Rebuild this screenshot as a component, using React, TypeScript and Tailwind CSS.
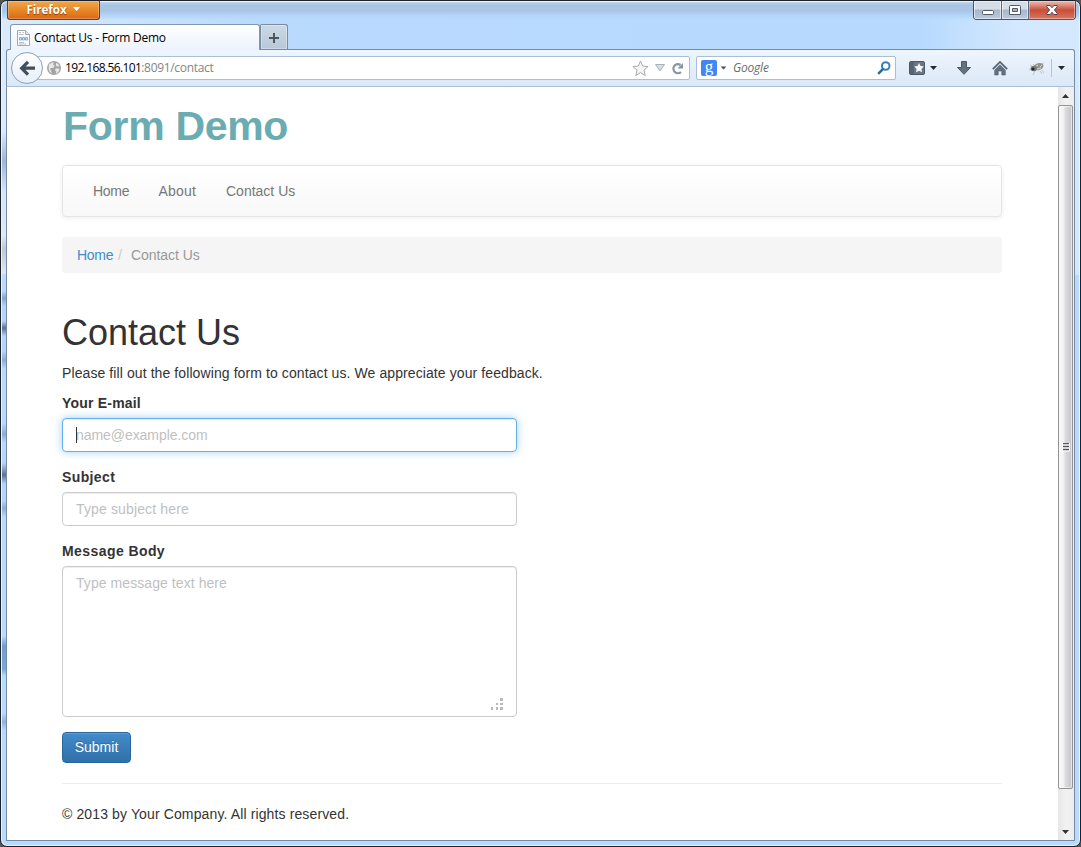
import React from 'react';

const uiFont = "font-['Open_Sans','Noto_Sans',sans-serif]";

function Caret({ className = '' }: { className?: string }) {
  return (
    <svg width="7" height="4" viewBox="0 0 7 4" className={`shrink-0 ${className}`}>
      <path d="M0 0h7L3.5 4z" fill="currentColor" />
    </svg>
  );
}

function TitleBar() {
  return (
    <div className="flex h-[23px] shrink-0 items-start justify-between pl-[6px] pr-[4px]">
      <button className={`flex h-[19px] w-[93px] items-center rounded-b-[3px] border border-t-0 border-[#7c3a13] bg-linear-to-b from-[#efa84c] via-[#e78929] to-[#db6713] pl-[18px] text-[11.5px] font-bold leading-[18px] text-white shadow-[inset_0_0_0_1px_#ffffff40] ${uiFont}`}>
        <span className="w-[41px] whitespace-nowrap [text-shadow:0_1px_1px_#8a3d0a]">Firefox</span>
        <Caret className="ml-[6px] mb-[2px]" />
      </button>
      <div className="flex h-[19px] w-[103px] overflow-hidden rounded-b-[4px] border border-t-0 border-[#46566b]">
        <div className="flex w-[28px] items-center justify-center border-r border-[#5c6d83] bg-linear-to-b from-[#d5dee8] from-45% via-[#a8b6c7] via-50% to-[#b9cbe1] shadow-[inset_0_0_0_1px_#ffffff80]">
          <svg width="14" height="14" className="mt-[5px]"><rect x="1.5" y="4.5" width="11" height="4" rx="1" fill="#fff" stroke="#535b69" /></svg>
        </div>
        <div className="flex w-[27px] items-center justify-center border-r border-[#5c6d83] bg-linear-to-b from-[#d5dee8] from-45% via-[#a8b6c7] via-50% to-[#b9cbe1] shadow-[inset_0_0_0_1px_#ffffff80]">
          <svg width="12" height="10"><path d="M.5 1.5q0-1 1-1h9q1 0 1 1v8H.5z" fill="#fff" stroke="#535b69" /><path d="M3.5 3.5h5v3h-5z" fill="#a7b4c6" stroke="#535b69" /></svg>
        </div>
        <div className="flex flex-1 items-center justify-center bg-linear-to-b from-[#e6a99d] from-10% via-[#c64e38] via-50% to-[#da765e] shadow-[inset_0_0_0_1px_#ffffff60]">
          <svg width="12" height="10" viewBox="0 0 12 10"><path d="M.8.5h3.4L6 2.7 7.8.5h3.4v1.3L8.4 5l2.8 3.2v1.3H7.8L6 7.3 4.2 9.5H.8V8.2L3.6 5 .8 1.8z" fill="#fff" stroke="#59414b" /></svg>
        </div>
      </div>
    </div>
  );
}

function TabStrip() {
  return (
    <div className="flex h-[25px] shrink-0 items-end pl-[9px]">
      <div className={`relative z-10 -mb-px flex h-[26px] w-[250px] items-center rounded-t-[3px] border border-b-0 border-[#7f97b1] bg-linear-to-b from-white to-[#ebf3fc] pl-[6px] text-[12px] text-black ${uiFont}`}>
        <svg width="13" height="16" viewBox="0 0 13 16" className="mr-[4px] shrink-0">
          <path d="M.5.5h8l4 4v11H.5z" fill="#fafbfc" stroke="#a1a9b0" />
          <path d="M8.5.5v4h4" fill="#e4e8eb" stroke="#a1a9b0" />
          <path d="M2 2.5h2M5.5 2.5h1.5M2 4.5h4.5M2 12.5h5M2 14h7" stroke="#b6bfc8" />
          <path d="M2.5 7.5h2v2.500h-2zM5.500 7.500h2v2.500h-2zM8.500 7.500h2v2.500h-2z" fill="#dce9f6" stroke="#8eabc8" />
        </svg>
        <span className="whitespace-nowrap tracking-[-0.24px]">Contact Us - Form Demo</span>
      </div>
      <div className="flex h-[25px] w-[28px] items-center justify-center rounded-tr-[3px] rounded-tl-[2px] border border-b-0 border-[#798ca2] bg-linear-to-b from-[#ccd9e5] to-[#b7c8d8] shadow-[inset_0_0_0_1px_#ffffff50]">
        <svg width="10" height="10" className="mt-px"><path d="M5 0v10M0 5h10" stroke="#4b5560" strokeWidth="2" /></svg>
      </div>
    </div>
  );
}

function NavBar() {
  return (
    <div className={`flex h-[38px] shrink-0 items-center rounded-t-[3px] border border-[#758ba5] border-b-[#a9bfd6] bg-linear-to-b from-[#eef5fd] to-[#dbe8f7] pl-[4px] text-[12px] ${uiFont}`}>
      <div className="z-10 flex size-[32px] shrink-0 items-center justify-center rounded-full border border-[#8ca0b6] bg-linear-to-b from-white to-[#e5eef8]">
        <svg width="17" height="17" viewBox="0 0 17 17"><path d="M9 1.8 2.7 8.2 9 14.6M3.2 8.2H16" fill="none" stroke="#424f5a" strokeWidth="3.2" /></svg>
      </div>
      <div className="-ml-[6px] flex h-[24px] w-[653px] shrink-0 items-center rounded-r-[2px] border border-[#aabfd5] bg-white pl-[9px]">
        <svg width="14" height="14" viewBox="0 0 14 14" className="mr-[4px] shrink-0">
          <circle cx="7" cy="7" r="7" fill="#a4a4a4" />
          <path d="M2 3.200 5 1.500l1.800.3-.7 2 1.600 1-1.500 2.100-2.400.2-.7 1.300 1.100 1.500.4 2.400-2-1.500-1-3zM9.200 1.800l2.200 1.400.9 1.900-2.200.6-1.300-1.600zM8.500 7.500l2.700-.2 1.400 1.500-1.800 2.900-1.800 1.100.3-2.400-1.300-1.200z" fill="#e8e8e8" />
        </svg>
        <span className="whitespace-nowrap text-[#858585]"><span className="tracking-[-0.62px] text-black">192.168.56.101</span><span className="tracking-[-0.32px]">:8091/contact</span></span>
        <svg width="17" height="17" viewBox="0 0 17 17" className="ml-auto mr-[6px] shrink-0"><path d="m8.5 1 2.2 5 5.4.5-4.1 3.6 1.2 5.4-4.7-2.9-4.7 2.9 1.2-5.4L.9 6.500 6.300 6z" fill="#f5f5f5" stroke="#aaa" /></svg>
        <svg width="10" height="8" className="mr-[6px] shrink-0"><path d="M.5.5h9l-4.500 6.500z" fill="#d6dde5" stroke="#a8b1ba" /></svg>
        <svg width="13" height="13" viewBox="0 0 13 13" className="mr-[5px] shrink-0"><path d="M9.500 3A4.500 4.500 0 1 0 10 10" fill="none" stroke="#8794a4" strokeWidth="2.3" /><path d="M12 1v5.500H6.500z" fill="#8794a4" /></svg>
      </div>
      <div className="ml-[6px] flex h-[24px] w-[200px] shrink-0 items-center rounded-[2px] border border-[#aabfd5] bg-white px-[4px]">
        <span className="flex size-[16px] items-center justify-center rounded-[2px] bg-[#4285f4] pb-[3px] font-['Liberation_Serif',serif] text-[17px] leading-[15px] text-white">g</span>
        <Caret className="ml-[3px] mr-[6px] scale-85 text-[#555]" />
        <span className="italic tracking-[-0.2px] text-[#6d6d6d]">Google</span>
        <svg width="14" height="14" viewBox="0 0 14 14" className="ml-auto"><circle cx="8.700" cy="5" r="3.800" fill="none" stroke="#3780bd" strokeWidth="2" /><path d="M6.300 7.700 1.200 12.800" stroke="#2868a1" strokeWidth="2.500" /></svg>
      </div>
      <svg width="16" height="14" viewBox="0 0 16 14" className="ml-[13px] shrink-0"><rect x=".5" y=".5" width="15" height="13" rx="1.500" fill="#697785" stroke="#4b5864" /><path d="M4 1v12M2 1v12" stroke="#475460" /><path d="m10 2 1.500 3.100 3.300.5-2.400 2.300.6 3.300-3-1.500-3 1.500.6-3.300-2.400-2.300 3.300-.5z" fill="#f6f9fd" /></svg>
      <Caret className="ml-[5px] text-[#222b34]" />
      <svg width="14" height="14" viewBox="0 0 14 14" className="ml-[20px] shrink-0"><path d="M4.500.5h5v6h4L7 13.300.5 6.500h4z" fill="#64717e" stroke="#4d5965" /></svg>
      <svg width="16" height="15" viewBox="0 0 16 15" className="ml-[21px] shrink-0"><path d="M.8 8.200 8 1l7.200 7.200" fill="none" stroke="#52606e" strokeWidth="1.700" /><path d="m8 3.800 5.300 5.100V14H9.800v-4H6.200v4H2.700V8.900z" fill="#63717e" stroke="#52606e" strokeWidth=".6" /></svg>
      <svg width="18" height="15" viewBox="0 0 18 15" className="ml-[20px] shrink-0"><path d="M2 4 5 6m-4 3 4-1m0 6 2-4m7-1 2 3M14 3l2-1M5 3l2 2M12 10l2 3" stroke="#aeb2b5" strokeWidth=".7" /><ellipse cx="10.500" cy="5.500" rx="4.900" ry="3.500" transform="rotate(-15 11 5)" fill="#929492" /><ellipse cx="5.800" cy="7.500" rx="3.200" ry="2.700" fill="#777c7b" /><circle cx="5" cy="8" r="1.600" fill="#252a2b" /><path d="m8 5 2-1m2 2 2-2m-5 4 4-1" stroke="#d1d2ca" /></svg>
      <div className="ml-[5px] h-[18px] w-px bg-[#b4c3d3]" />
      <Caret className="ml-[6px] text-[#222b34]" />
    </div>
  );
}

function ScrollBar() {
  return (
    <div className="flex h-full w-[16px] shrink-0 flex-col items-center bg-linear-to-r from-[#e6e6e6] via-[#f2f2f2] to-[#ededed] pr-px">
      <div className="flex h-[18px] items-center text-[#333]"><Caret className="rotate-180" /></div>
      <div className="flex h-[684px] w-[15px] items-center justify-center rounded-[2px] border border-[#929292] bg-linear-to-r from-[#f5f5f5] from-30% via-[#dcdcdf] via-50% to-[#c2c3c8] shadow-[inset_0_0_0_1px_#ffffff90]">
        <svg width="8" height="9"><path d="M0 1h8M0 4h8M0 7h8" stroke="#fff" strokeWidth="3" /><path d="M1 .5h6M1 3.500h6M1 6.500h6" stroke="#555" strokeWidth="1.500" /></svg>
      </div>
      <div className="mt-auto flex h-[17px] items-center text-[#333]"><Caret /></div>
    </div>
  );
}

const fieldClass = "block w-[455px] rounded-[4px] border border-[#ccc] bg-white px-[13px] text-[14px] leading-[20px] text-[#555] shadow-[inset_0_1px_1px_#00000013] outline-none placeholder:text-[#bfbfbf] placeholder:opacity-100";

function ContactPage() {
  return (
    <main className="min-w-0 flex-1 bg-white pl-[55px] pt-[16px] font-['Liberation_Sans',Arial,sans-serif] text-[14px] leading-[20px] text-[#333]">
      <div className="w-[940px]">
        <h1 className="h-[62px] pl-px text-[41px] font-bold leading-[46px] tracking-[-0.3px] text-[#6aacb1]">Form Demo</h1>
        <nav className="flex h-[52px] items-center gap-[30px] rounded-[4px] border border-[#e5e5e5] bg-linear-to-b from-white to-[#f8f8f8] px-[30px] text-[#777] shadow-[0_1px_5px_#00000013]">
          <a href="#" className="w-[35.5px] whitespace-nowrap tracking-[-0.3px]">Home</a>
          <a href="#" className="w-[37.5px] whitespace-nowrap tracking-[0.2px]">About</a>
          <a href="#">Contact Us</a>
        </nav>
        <ol className="mt-[20px] flex h-[36px] items-center rounded-[4px] bg-[#f5f5f5] px-[15px] text-[#999]">
          <li className="w-[37px] tracking-[-0.3px] text-[#428bca]">Home</li>
          <li className="ml-[4px] mr-[9px] text-[#ccc]">/</li>
          <li className="tracking-[-0.05px]">Contact Us</li>
        </ol>
        <h2 className="mt-[40px] text-[36px] leading-[40px]">Contact Us</h2>
        <p className="mt-[10px] tracking-[0.092px]">Please fill out the following form to contact us. We appreciate your feedback.</p>
        <form onSubmit={(e) => e.preventDefault()}>
          <label className="mt-[10px] block font-bold tracking-[0.2px]" htmlFor="email">Your E-mail</label>
          <div className="relative mt-[5px] w-[455px]">
            <input id="email" placeholder="name@example.com" className={`${fieldClass} h-[34px] border-[#66afe9]! tracking-[-0.06px] shadow-[inset_0_1px_1px_#00000013,0_0_8px_#66afe999]!`} />
            <span className="absolute left-[14px] top-[9px] h-[16px] w-px bg-[#333]" />
          </div>
          <label className="mt-[15px] block font-bold tracking-[0.38px]" htmlFor="subject">Subject</label>
          <input id="subject" placeholder="Type subject here" className={`${fieldClass} mt-[5px] h-[34px] tracking-[0.14px]`} />
          <label className="mt-[15px] block font-bold tracking-[0.42px]" htmlFor="body">Message Body</label>
          <div className="relative mt-[5px] w-[455px]">
            <textarea id="body" placeholder="Type message text here" className={`${fieldClass} h-[151px] resize-none pt-[6px] tracking-[0.07px]`} />
            <svg className="absolute bottom-[7px] right-[14px]" width="12" height="12"><path d="M0 9h2v3H0zM5 9h2v3H5zM9 9h3v3H9zM5 5h2v2H5zM9 5h3v2H9zM9 0h3v3H9z" fill="#b9b9b9" /></svg>
          </div>
          <button className="mt-[15px] block h-[31px] w-[69px] rounded-[4px] border border-[#2b669a] bg-linear-to-b from-[#428bca] to-[#3071a9] pb-px text-white shadow-[inset_0_1px_0_#ffffff26] [text-shadow:0_-1px_0_#00000033]">Submit</button>
        </form>
        <footer className="mt-[20px] border-t border-[#eee] pt-[20px] tracking-[0.125px]">© 2013 by Your Company. All rights reserved.</footer>
      </div>
    </main>
  );
}

export default function App() {
  return (
    <div className="h-[847px] w-[1081px] overflow-hidden bg-[#555]">
      <div className="flex h-full w-full flex-col rounded-[7px] border border-[#19212c] bg-[#b9dafd] bg-[linear-gradient(180deg,transparent_130px,#9bb7d8_160px,#d5e4f8_190px,#dfe8f6_235px,#c5c5d4_248px,#e2e6f1_272px,#b9dafd_274px,#b9dafd_290px,#86a4c6_297px,#b5d5f8_305px,#b5d5f8_320px,#5c718e_327px,#b5d5f8_335px,#b5d5f8_350px,#8dadd0_359px,#b9dafd_368px,#b9dafd_422px,#8bacd0_433px,#b9dafd_442px,#b5d5f8_462px,#5c718e_474px,#b5d5f8_483px,#b5d5f8_500px,#8dadd0_507px,#b9dafd_516px,#b9dafd_635px,#6f9fcf_645px,#78a8d7_668px,#b9dafd_675px,#b9dafd_712px,#91b2d5_721px,#b9dafd_730px),linear-gradient(180deg,#c8d9ed_0px,#a9c4e1_4px,#a6c5e5_9px,#b4d6fa_15px,transparent_19px),linear-gradient(90deg,#dcebfb_0%,#b9dafd_24%,#b6d9fd_85%,#d4e8ff_94%,#d4e8ff_100%)] bg-[length:5px_100%,100%_100%,100%_274px] bg-no-repeat shadow-[inset_0_0_0_1px_#e8f4ff]">
        <TitleBar />
        <TabStrip />
        <div className="mx-[5px] mb-[5px] flex min-h-0 flex-1 flex-col">
          <NavBar />
          <div className="flex min-h-0 flex-1 border border-t-0 border-[#758ba5]">
            <ContactPage />
            <ScrollBar />
          </div>
        </div>
      </div>
    </div>
  );
}
